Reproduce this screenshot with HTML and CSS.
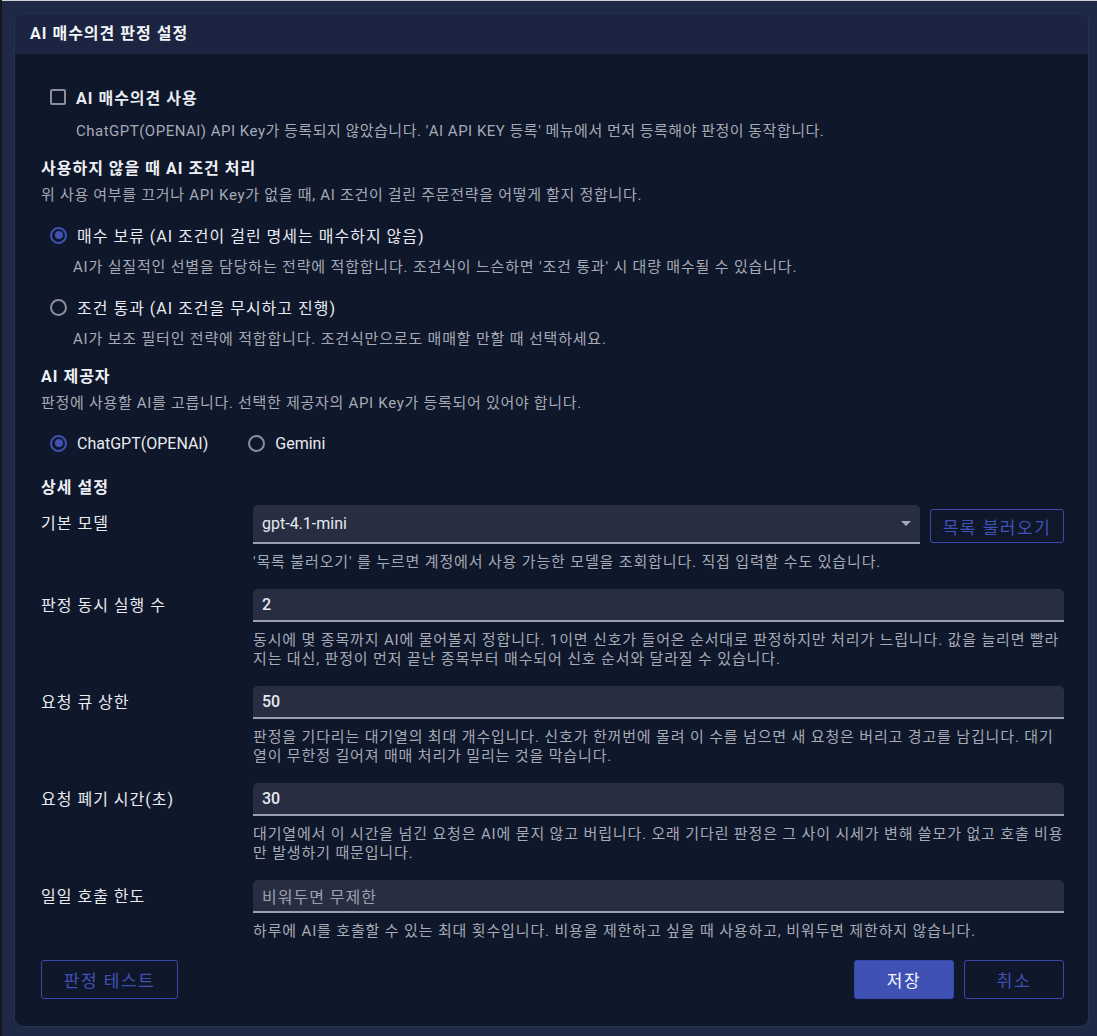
FILE: index.html
```html
<!DOCTYPE html>
<html lang="ko">
<head>
    <meta charset="UTF-8">
    <meta name="viewport" content="width=device-width, initial-scale=1.0">
    <title>AI 매수의견 판정 설정</title>
    <link rel="stylesheet" href="styles.css">
</head>
<body>
    <div class="frame">
        <div class="dialog">
            <div class="dialog-header">AI 매수의견 판정 설정</div>
            <div class="dialog-body">
                <div class="option check-row">
                    <span class="checkbox"></span>
                    <span class="option-label strong">AI 매수의견 사용</span>
                </div>
                <p class="check-desc">ChatGPT(OPENAI) API Key가 등록되지 않았습니다. 'AI API KEY 등록' 메뉴에서 먼저 등록해야 판정이 동작합니다.</p>

                <h3 class="section-title first">사용하지 않을 때 AI 조건 처리</h3>
                <p class="section-desc">위 사용 여부를 끄거나 API Key가 없을 때, AI 조건이 걸린 주문전략을 어떻게 할지 정합니다.</p>

                <div class="option radio-row">
                    <span class="radio checked"></span>
                    <span class="option-label">매수 보류 (AI 조건이 걸린 명세는 매수하지 않음)</span>
                </div>
                <p class="radio-desc">AI가 실질적인 선별을 담당하는 전략에 적합합니다. 조건식이 느슨하면 '조건 통과' 시 대량 매수될 수 있습니다.</p>

                <div class="option radio-row">
                    <span class="radio"></span>
                    <span class="option-label">조건 통과 (AI 조건을 무시하고 진행)</span>
                </div>
                <p class="radio-desc">AI가 보조 필터인 전략에 적합합니다. 조건식만으로도 매매할 만할 때 선택하세요.</p>

                <h3 class="section-title">AI 제공자</h3>
                <p class="section-desc">판정에 사용할 AI를 고릅니다. 선택한 제공자의 API Key가 등록되어 있어야 합니다.</p>

                <div class="provider-row">
                    <div class="option">
                        <span class="radio checked"></span>
                        <span class="option-label latin">ChatGPT(OPENAI)</span>
                    </div>
                    <div class="option">
                        <span class="radio"></span>
                        <span class="option-label latin">Gemini</span>
                    </div>
                </div>

                <h3 class="section-title detail">상세 설정</h3>

                <div class="field-row model-row">
                    <label class="field-label">기본 모델</label>
                    <div class="field-main">
                        <div class="select-line">
                            <div class="field select">
                                <span class="field-value">gpt-4.1-mini</span>
                                <span class="caret"></span>
                            </div>
                            <button class="btn btn-outline btn-list">목록 불러오기</button>
                        </div>
                        <p class="field-desc">'목록 불러오기' 를 누르면 계정에서 사용 가능한 모델을 조회합니다. 직접 입력할 수도 있습니다.</p>
                    </div>
                </div>

                <div class="field-row">
                    <label class="field-label">판정 동시 실행 수</label>
                    <div class="field-main">
                        <div class="field"><span class="field-value num">2</span></div>
                        <p class="field-desc">동시에 몇 종목까지 AI에 물어볼지 정합니다. 1이면 신호가 들어온 순서대로 판정하지만 처리가 느립니다. 값을 늘리면 빨라지는 대신, 판정이 먼저 끝난 종목부터 매수되어 신호 순서와 달라질 수 있습니다.</p>
                    </div>
                </div>

                <div class="field-row">
                    <label class="field-label">요청 큐 상한</label>
                    <div class="field-main">
                        <div class="field"><span class="field-value num">50</span></div>
                        <p class="field-desc">판정을 기다리는 대기열의 최대 개수입니다. 신호가 한꺼번에 몰려 이 수를 넘으면 새 요청은 버리고 경고를 남깁니다. 대기열이 무한정 길어져 매매 처리가 밀리는 것을 막습니다.</p>
                    </div>
                </div>

                <div class="field-row">
                    <label class="field-label">요청 폐기 시간(초)</label>
                    <div class="field-main">
                        <div class="field"><span class="field-value num">30</span></div>
                        <p class="field-desc">대기열에서 이 시간을 넘긴 요청은 AI에 묻지 않고 버립니다. 오래 기다린 판정은 그 사이 시세가 변해 쓸모가 없고 호출 비용만 발생하기 때문입니다.</p>
                    </div>
                </div>

                <div class="field-row">
                    <label class="field-label">일일 호출 한도</label>
                    <div class="field-main">
                        <div class="field"><span class="field-value placeholder">비워두면 무제한</span></div>
                        <p class="field-desc">하루에 AI를 호출할 수 있는 최대 횟수입니다. 비용을 제한하고 싶을 때 사용하고, 비워두면 제한하지 않습니다.</p>
                    </div>
                </div>

                <div class="dialog-actions">
                    <button class="btn btn-outline btn-test">판정 테스트</button>
                    <div class="actions-right">
                        <button class="btn btn-primary">저장</button>
                        <button class="btn btn-outline">취소</button>
                    </div>
                </div>
            </div>
        </div>
    </div>
</body>
</html>
```

FILE: styles.css
```css
html, body {
    margin: 0;
    padding: 0;
    background-color: #15171d;
}
body {
    font-family: Roboto, "Noto Sans CJK KR", sans-serif;
    color: #e4e7ee;
    font-size: 16px;
    letter-spacing: 1px;
}
p, h3 {
    margin: 0;
}
.frame {
    height: 1036px;
    margin-left: 2px;
    padding: 13px 9px 0 13px;
    box-sizing: border-box;
    border-top: 1px solid #cfd1d4;
    background-color: #1e2945;
}
.dialog {
    height: 1012px;
    border-radius: 8px;
    overflow: hidden;
    background-color: #0f172a;
    box-shadow: 0 0 0 1px #243152;
}
.dialog-header {
    height: 40px;
    line-height: 40px;
    padding-left: 15px;
    background-color: #1b2441;
    font-size: 16px;
    font-weight: bold;
    color: #f2f4f8;
}
.dialog-body {
    padding: 0 24px 0 26px;
}

/* checkbox + radios */
.option {
    display: flex;
    align-items: center;
    height: 20px;
}
.check-row {
    margin-top: 33px;
    padding-left: 9px;
}
.checkbox {
    width: 12px;
    height: 12px;
    border: 2px solid #8a8f99;
    border-radius: 2px;
    margin-right: 10px;
}
.radio {
    width: 13px;
    height: 13px;
    border: 2px solid #8a8f99;
    border-radius: 50%;
    margin-right: 10px;
    position: relative;
}
.radio.checked {
    border-color: #3f51b5;
}
.radio.checked::after {
    content: "";
    position: absolute;
    left: 2.5px;
    top: 2.5px;
    width: 8px;
    height: 8px;
    border-radius: 50%;
    background-color: #3f51b5;
}
.option-label {
    font-size: 16px;
    color: #e8ebf1;
}
.option-label.latin {
    letter-spacing: 0;
}
.strong {
    font-weight: bold;
}
.check-desc {
    margin-top: 14px;
    padding-left: 35px;
    line-height: 20px;
    font-size: 15px;
    letter-spacing: 0.5px;
    color: #a5aab5;
}
.section-title {
    margin-top: 18px;
    line-height: 20px;
    font-size: 16px;
    font-weight: bold;
    color: #eef0f5;
}
.section-desc {
    margin-top: 6px;
    line-height: 20px;
    font-size: 15px;
    letter-spacing: 0.7px;
    color: #a5aab5;
}
.radio-row {
    margin-top: 20px;
    padding-left: 9px;
}
.radio-desc {
    margin-top: 12px;
    padding-left: 32px;
    line-height: 20px;
    font-size: 15px;
    letter-spacing: 0.82px;
    color: #a5aab5;
}
.provider-row {
    display: flex;
    gap: 40px;
    margin-top: 20px;
    padding-left: 9px;
}
.section-title.detail {
    margin-top: 25px;
}

/* fields */
.field-row {
    display: flex;
    margin-top: 17px;
}
.model-row {
    margin-top: 7px;
}
.field-label {
    width: 212px;
    flex-shrink: 0;
    height: 33px;
    line-height: 34px;
    font-size: 16px;
    color: #e8ebf1;
}
.model-row .field-label {
    height: 39px;
    line-height: 37px;
}
.field-main {
    flex: 1;
}
.select-line {
    display: flex;
    align-items: center;
    gap: 10px;
}
.field {
    height: 31px;
    display: flex;
    align-items: center;
    padding: 0 9px;
    background-color: #282e42;
    border-bottom: 2px solid #9aa0ad;
    border-radius: 5px 5px 0 0;
}
.field.select {
    flex: 1;
    height: 37px;
    justify-content: space-between;
}
.field-value {
    font-size: 16px;
    letter-spacing: 0;
    color: #e6e9ef;
}
.field-value.num {
    font-weight: 500;
}
.field-value.placeholder {
    letter-spacing: 1px;
    color: #9ca1ac;
}
.caret {
    width: 0;
    height: 0;
    border-left: 5px solid transparent;
    border-right: 5px solid transparent;
    border-top: 5px solid #a3a8b3;
}
.field-desc {
    margin-top: 9px;
    line-height: 19px;
    font-size: 15px;
    letter-spacing: 0.85px;
    color: #a5aab5;
}

/* buttons */
.btn {
    font-family: Roboto, "Noto Sans CJK KR", sans-serif;
    font-size: 17px;
    letter-spacing: 1.5px;
    border-radius: 3px;
    cursor: pointer;
    box-sizing: border-box;
}
.btn-outline {
    background: transparent;
    color: #4052b5;
    border: 1px solid #3949ab;
}
.btn-primary {
    background-color: #3f51b5;
    color: #f4f5fa;
    border: 1px solid #3448a8;
}
.btn-list {
    width: 134px;
    height: 34px;
    margin-top: 3px;
}
.dialog-actions {
    display: flex;
    justify-content: space-between;
    margin-top: 19px;
}
.dialog-actions .btn {
    height: 39px;
    width: 100px;
}
.dialog-actions .btn-test {
    width: 137px;
}
.actions-right {
    display: flex;
    gap: 10px;
}
```
